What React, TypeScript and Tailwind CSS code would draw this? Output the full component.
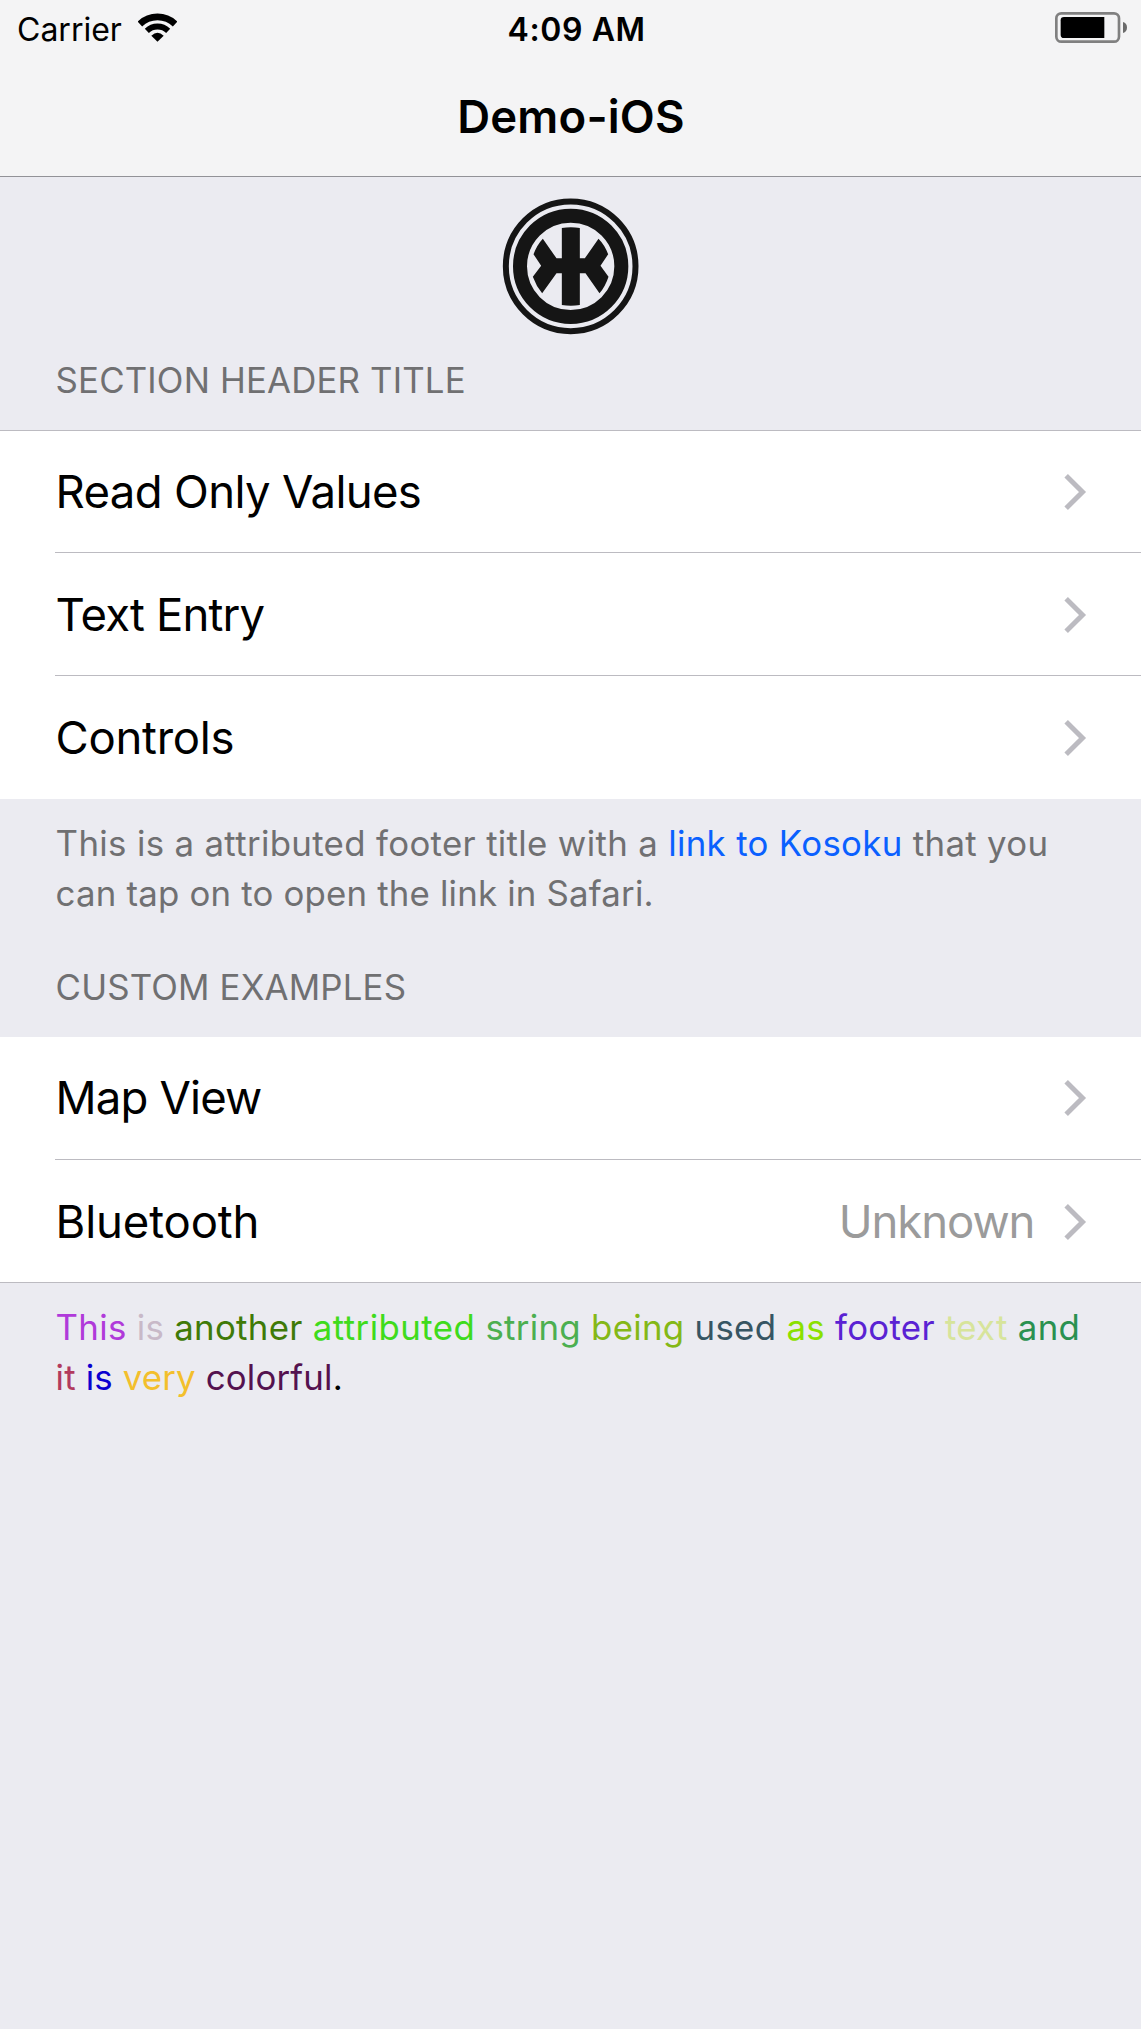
import type { ReactNode } from 'react';

const WifiIcon = () => (
  <svg className="h-[29px] w-[39px]" viewBox="413 39 117 87" fill="none" stroke="#000">
    <path d="M418.500 72A76 76 0 0 1 524.500 72" strokeWidth="20" />
    <path d="M439.500 92.500A46 46 0 0 1 503.500 92.500" strokeWidth="17.500" />
    <path d="M453 107Q471.500 89 490 107L471.500 125.500Z" fill="#000" stroke="none" />
  </svg>
);

const BatteryIcon = () => (
  <svg className="h-[31px] w-[72px]" viewBox="166 36 216 93">
    <rect x="170" y="40" width="188" height="85" rx="15" fill="none" stroke="#808080" strokeWidth="8" />
    <path d="M314 51V114H193Q183 114 183 104V61Q183 51 193 51Z" fill="#000" />
    <path d="M370 66Q382 70 382 82.500Q382 95 370 99Z" fill="#6b6b6b" />
  </svg>
);

const Logo = () => (
  <svg className="size-[138px]" viewBox="35.5 36 414 414">
    <g fill="none" stroke="#151515">
      <circle cx="241.500" cy="244" r="194.500" strokeWidth="18" />
      <circle cx="241.500" cy="244" r="152" strokeWidth="42" />
    </g>
    <path
      d="M215 129Q242 124 269 129V220H284L325 161Q344 180 354 208L331 242L355 275Q346 303 328 325L286 265H269V360Q242 365 215 360V265H199L156 325Q138 303 128 275L153 242L130 208Q140 180 158 161L199 220H215Z"
      fill="#151515"
    />
  </svg>
);

const Chevron = () => (
  <svg className="h-[38px] w-[24px]" viewBox="188 159 72 114" fill="none" stroke="#bcbbc1" strokeWidth="15">
    <path d="M197.500 167.500L246.500 216L197.500 264.500" />
  </svg>
);

/** A disclosure row; `divider` draws the inset line along its bottom edge. */
function Row({
  label,
  tracking,
  size = 'h-[123px] pt-px',
  value,
  divider = false,
}: {
  label: string;
  tracking: string;
  size?: string;
  value?: string;
  divider?: boolean;
}) {
  return (
    <div className="pl-[55px]">
      <div
        className={`flex items-start justify-between pr-[54.3px] pl-[0.6px] text-[45.5px] leading-[121px] whitespace-nowrap ${size} ${
          divider ? 'border-b border-[#bcbbc1]' : ''
        }`}
      >
        <span className={tracking}>{label}</span>
        <div className="flex h-[121px] items-center gap-[28.3px]">
          {value && <span className="tracking-[-1.06px] text-[#9b9b9b]">{value}</span>}
          <Chevron />
        </div>
      </div>
    </div>
  );
}

const SectionTitle = ({ children }: { children: ReactNode }) => (
  <h2 className="pl-[55.6px] text-[34.8px] leading-[42px] tracking-[0.16px] text-[#707072]">{children}</h2>
);

const Footer = ({ children }: { children: ReactNode }) => (
  <p className="pl-[55.6px] text-[34.8px] leading-[49.5px] whitespace-nowrap text-[#707072]">{children}</p>
);

export default function App() {
  return (
    <div className="h-[2029px] w-[1141px] overflow-hidden bg-[#ebebf1] font-['Inter',sans-serif] text-black">
      <header className="h-[177px] border-b border-[#929297] bg-[#f4f4f5]">
        <div className="flex h-[59px] items-start pr-[13.7px] text-[32px] leading-[59px]">
          <div className="flex w-[507.6px] items-start pl-[17px]">
            <span className="w-[120.7px]">Carrier</span>
            <div className="pt-[13px]">
              <WifiIcon />
            </div>
          </div>
          <span className="font-semibold tracking-[0.59px]">4:09 AM</span>
          <div className="ml-auto pt-[12px]">
            <BatteryIcon />
          </div>
        </div>
        <h1 className="pt-[30px] pl-px text-center text-[45.5px] leading-[55px] font-semibold tracking-[0.17px]">
          Demo-iOS
        </h1>
      </header>

      <div className="flex justify-center pt-[20px] pb-[24px]">
        <Logo />
      </div>

      <SectionTitle>SECTION HEADER TITLE</SectionTitle>
      <section className="mt-[29px] border-t border-[#bcbbc1] bg-white">
        <Row label="Read Only Values" size="h-[122px]" tracking="tracking-[-0.66px]" divider />
        <Row label="Text Entry" tracking="tracking-[-0.86px]" divider />
        <Row label="Controls" tracking="tracking-[-0.3px]" />
      </section>

      <div className="mt-[20px]">
        <Footer>
          <span className="tracking-[0.335px]">
            This is a attributed footer title with a <a className="text-[#0a60ff]">link to Kosoku</a> that you
          </span>
          <br />
          <span className="tracking-[0.19px]">can tap on to open the link in Safari.</span>
        </Footer>
      </div>

      <div className="mt-[48px]">
        <SectionTitle>CUSTOM EXAMPLES</SectionTitle>
      </div>
      <section className="mt-[29px] border-b border-[#bcbbc1] bg-white">
        <Row label="Map View" size="h-[123px]" tracking="tracking-[-0.85px]" divider />
        <Row label="Bluetooth" size="h-[122px] pt-px" tracking="tracking-[-0.14px]" value="Unknown" />
      </section>

      <div className="mt-[20px]">
        <Footer>
          <span className="tracking-[0.3px]">
            <span className="text-[#b03ada]">This</span> <span className="text-[#c8b9c8]">is</span>{' '}
            <span className="text-[#3f7a08]">another</span>{' '}
            <span className="tracking-[0.45px] text-[#3fdb1c]">attributed</span>{' '}
            <span className="text-[#4caf50]">string</span> <span className="text-[#84b817]">being</span>{' '}
            <span className="text-[#365563]">used</span> <span className="text-[#8be000]">as</span>{' '}
            <span className="text-[#5a22d3]">footer</span> <span className="text-[#d7e49b]">text</span>{' '}
            <span className="text-[#2a9150]">and</span>
          </span>
          <br />
          <span className="tracking-[0.164px]">
            <span className="text-[#b23a5e]">it</span> <span className="text-[#0a00d0]">is</span>{' '}
            <span className="text-[#f3bf2c]">very</span> <span className="text-[#54124f]">colorful</span>
            <span className="text-black">.</span>
          </span>
        </Footer>
      </div>
    </div>
  );
}
